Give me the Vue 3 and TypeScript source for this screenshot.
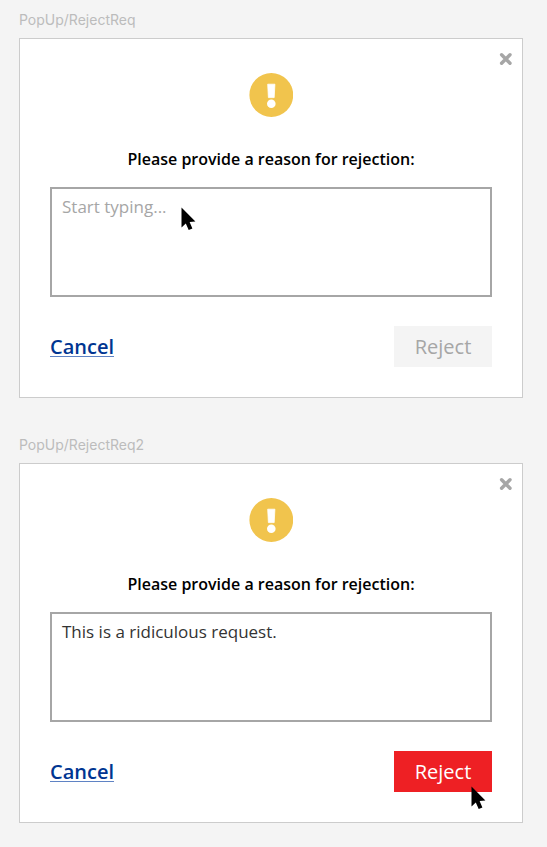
<script setup lang="ts">
import { reactive } from 'vue'

interface Popup {
  id: string
  name: string
  reason: string
  pointer: 'field' | 'button'
}

const popups = reactive<Popup[]>([
  { id: 'reject-req', name: 'PopUp/RejectReq', reason: '', pointer: 'field' },
  { id: 'reject-req-2', name: 'PopUp/RejectReq2', reason: 'This is a ridiculous request.', pointer: 'button' },
])
</script>

<template>
  <main class="board">
    <section v-for="popup in popups" :key="popup.id" class="frame">
      <h2 class="frame-name">{{ popup.name }}</h2>
      <form class="popup" @submit.prevent>
        <button class="close" type="button" aria-label="Close">
          <svg viewBox="0 0 14 14" width="14" height="14" aria-hidden="true">
            <path d="M2.6 2.8 11 11.2M11 2.8 2.6 11.2" fill="none" stroke="#a6a6a6" stroke-width="3.4" stroke-linecap="round" />
          </svg>
        </button>
        <svg class="alert" viewBox="0 0 44 44" width="44" height="44" aria-hidden="true">
          <circle cx="22.3" cy="22" r="21.9" fill="#f1c44d" />
          <path d="M18.7 11.2H25.9L25.2 24.6H19.4Z" fill="#fff" stroke="#fff" stroke-width="0.8" stroke-linejoin="round" />
          <circle cx="22.3" cy="30.7" r="4.3" fill="#fff" />
        </svg>
        <label class="title" :for="popup.id">Please provide a reason for rejection:</label>
        <div class="field">
          <textarea :id="popup.id" v-model="popup.reason" class="reason" placeholder="Start typing..." spellcheck="false"></textarea>
          <svg v-if="popup.pointer === 'field'" class="pointer" viewBox="0 0 15 24" width="15" height="24" aria-hidden="true">
            <path d="M0.5 0.5V20.5L4.8 16.6L7.7 23L11.4 21.4L8.6 15.1L14.4 14.4Z" />
          </svg>
        </div>
        <div class="actions">
          <a class="cancel" href="#">Cancel</a>
          <div class="submit">
            <button class="reject" type="submit" :disabled="!popup.reason">Reject</button>
            <svg v-if="popup.pointer === 'button'" class="pointer" viewBox="0 0 15 24" width="15" height="24" aria-hidden="true">
              <path d="M0.5 0.5V20.5L4.8 16.6L7.7 23L11.4 21.4L8.6 15.1L14.4 14.4Z" />
            </svg>
          </div>
        </div>
      </form>
    </section>
  </main>
</template>

<style>
body {
  background: #f4f4f4;
}
</style>

<style scoped>
.board {
  display: flex;
  flex-direction: column;
  gap: 39px;
  padding: 12px 24px 24px 19px;
  font-family: "Open Sans", sans-serif;
}

.frame-name {
  margin: 0 0 10px;
  font: 400 14px/16px Inter, sans-serif;
  color: #bcbcbc;
}

.popup {
  position: relative;
  display: flex;
  flex-direction: column;
  align-items: center;
  padding: 34px 30px 30px;
  border: 1px solid #cccccc;
  background: #fff;
}

.close {
  position: absolute;
  top: 13px;
  right: 9px;
  display: flex;
  padding: 0;
  border: 0;
  background: none;
}

.title {
  margin: 30px 0 16px;
  font-size: 16px;
  font-weight: 600;
  line-height: 24px;
  color: #000;
}

.field {
  position: relative;
  align-self: stretch;
}

.reason {
  display: block;
  box-sizing: border-box;
  width: 100%;
  height: 110px;
  padding: 6px 10px;
  border: 2px solid #a6a6a6;
  border-radius: 0;
  outline: none;
  resize: none;
  background: #fff;
  font: 400 17px/24px "Open Sans", sans-serif;
  color: #333;
}

.reason::placeholder {
  color: #a6a6a6;
  opacity: 1;
}

.actions {
  display: flex;
  align-self: stretch;
  align-items: center;
  justify-content: space-between;
  margin-top: 29px;
}

.cancel {
  font-size: 20px;
  font-weight: 600;
  line-height: 28px;
  color: #003591;
  text-decoration-color: #5f83c4;
  text-decoration-thickness: 1px;
  text-underline-offset: 2px;
}

.submit {
  position: relative;
}

.reject {
  display: block;
  width: 98px;
  height: 41px;
  padding: 0;
  border: 0;
  background: #ee2024;
  font: 400 20px/28px "Open Sans", sans-serif;
  color: #fff;
}

.reject:disabled {
  background: #f4f4f4;
  color: #a6a6a6;
}

.pointer {
  position: absolute;
  pointer-events: none;
}

.field .pointer {
  top: 20px;
  left: 131px;
}

.submit .pointer {
  top: 35px;
  left: 77px;
}
</style>
